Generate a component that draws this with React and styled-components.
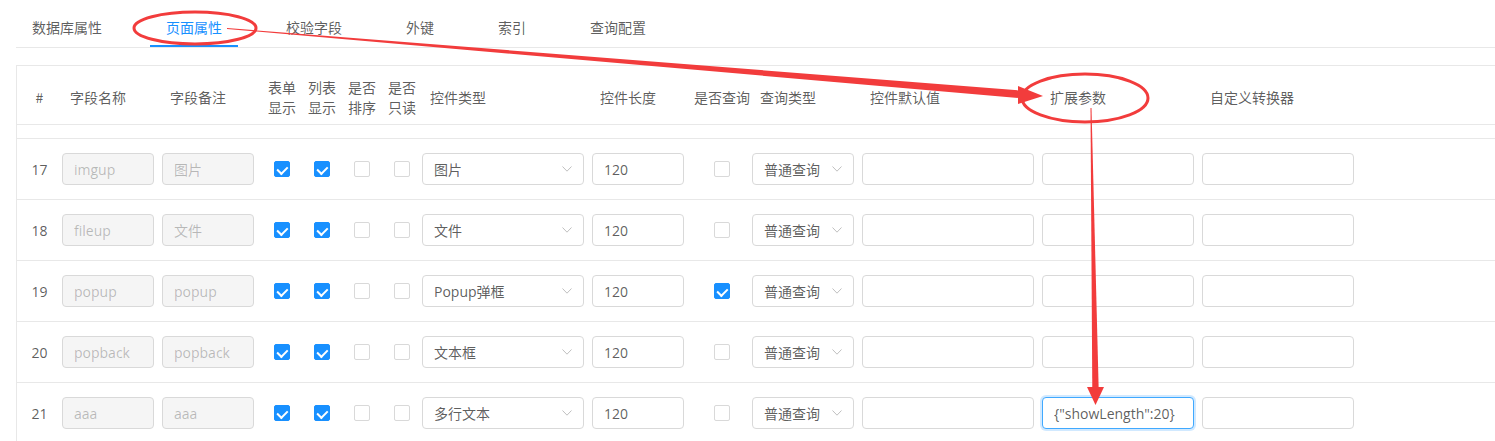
import React from "react";
import styled, { createGlobalStyle, css } from "styled-components";

const Global = createGlobalStyle`
  html, body { margin: 0; padding: 0; background: #fff; overflow: hidden; }
  body {
    font-family: "Open Sans", "Noto Sans CJK SC", sans-serif;
    font-size: 14px;
    color: rgba(0,0,0,0.65);
  }
  * { box-sizing: border-box; }
`;

const COLS = "45px 100px 100px 40px 40px 40px 40px 170px 100px 60px 110px 180px 160px 160px 1fr";

const Page = styled.div`
  position: relative;
  width: 1495px;
  height: 441px;
  overflow: hidden;
`;

const TabNav = styled.div`
  display: flex;
  margin-left: 16px;
  height: 48px;
  border-bottom: 1px solid #e8e8e8;
`;

const Tab = styled.div`
  position: relative;
  padding: 16px 16px 9px;
  margin-right: 32px;
  line-height: 22px;
  height: 47px;
  font-family: "Noto Sans CJK SC", sans-serif;
  color: ${(p) => (p.$active ? "#1890ff" : "rgba(0,0,0,0.65)")};
  white-space: nowrap;
  ${(p) =>
    p.$active &&
    css`
      &::after {
        content: "";
        position: absolute;
        left: 0;
        right: 0;
        bottom: 0;
        height: 2px;
        background: #1890ff;
      }
    `}
`;

const Frame = styled.div`
  margin-top: 17px;
  margin-left: 16px;
  border-top: 1px solid #e8e8e8;
  border-left: 1px solid #e8e8e8;
`;

const HeaderRow = styled.div`
  display: grid;
  grid-template-columns: ${COLS};
  height: 59px;
  border-bottom: 1px solid #e8e8e8;
`;

const HeadCell = styled.div`
  display: flex;
  align-items: center;
  justify-content: ${(p) => (p.$center ? "center" : "flex-start")};
  text-align: ${(p) => (p.$center ? "center" : "left")};
  padding: ${(p) => (p.$center ? "0" : "0 8px")};
  padding-top: 3px;
  font-family: "Noto Sans CJK SC", sans-serif;
  line-height: 20px;
  color: rgba(0,0,0,0.65);
  white-space: nowrap;
`;

const SpacerRow = styled.div`
  height: 14px;
  border-bottom: 1px solid #e8e8e8;
`;

const Row = styled.div`
  display: grid;
  grid-template-columns: ${COLS};
  height: 61px;
  border-bottom: 1px solid #e8e8e8;
`;

const Cell = styled.div`
  display: flex;
  align-items: center;
  justify-content: ${(p) => (p.$center ? "center" : "flex-start")};
`;

const Num = styled.span`
  color: rgba(0,0,0,0.65);
`;

const Input = styled.input`
  width: ${(p) => p.$w}px;
  height: 32px;
  padding: 4px 11px;
  border: 1px solid ${(p) => (p.$focused ? "#40a9ff" : "#d9d9d9")};
  border-radius: 4px;
  font: inherit;
  font-size: 14px;
  color: rgba(0,0,0,0.65);
  background: #fff;
  outline: none;
  ${(p) =>
    p.$focused &&
    css`
      box-shadow: 0 0 0 2px rgba(24,144,255,0.2);
    `}
  ${(p) =>
    p.disabled &&
    css`
      background: #f5f5f5;
      color: rgba(0,0,0,0.25);
    `}
  &:disabled { -webkit-text-fill-color: rgba(0,0,0,0.25); }
`;

const Select = styled.div`
  width: ${(p) => p.$w}px;
  height: 32px;
  display: flex;
  align-items: center;
  justify-content: space-between;
  padding: 0 11px 0 11px;
  border: 1px solid #d9d9d9;
  border-radius: 4px;
  font-family: "Open Sans", "Noto Sans CJK SC", sans-serif;
  color: rgba(0,0,0,0.65);
  white-space: nowrap;
`;

const Check = styled.span`
  position: relative;
  display: inline-block;
  width: 16px;
  height: 16px;
  border-radius: 2px;
  border: 1px solid ${(p) => (p.$on ? "#1890ff" : "#d9d9d9")};
  background: ${(p) => (p.$on ? "#1890ff" : "#fff")};
  ${(p) =>
    p.$on &&
    css`
      &::after {
        content: "";
        position: absolute;
        left: 4px;
        top: 1.5px;
        width: 4.5px;
        height: 8px;
        border: 2px solid #fff;
        border-top: 0;
        border-left: 0;
        transform: rotate(45deg);
      }
    `}
`;

const Overlay = styled.svg`
  position: absolute;
  left: 0;
  top: 0;
  pointer-events: none;
`;

const Chevron = () => (
  <svg width="10" height="6" viewBox="0 0 10 6">
    <polyline points="0.5,0.5 5,5.2 9.5,0.5" fill="none" stroke="#bfbfbf" strokeWidth="1" />
  </svg>
);

const tabs = ["数据库属性", "页面属性", "校验字段", "外键", "索引", "查询配置"];

const headers = [
  { t: "#", c: true },
  { t: "字段名称" },
  { t: "字段备注" },
  { t: ["表单", "显示"], c: true },
  { t: ["列表", "显示"], c: true },
  { t: ["是否", "排序"], c: true },
  { t: ["是否", "只读"], c: true },
  { t: "控件类型" },
  { t: "控件长度" },
  { t: "是否查询", c: true },
  { t: "查询类型" },
  { t: "控件默认值" },
  { t: "扩展参数" },
  { t: "自定义转换器" },
  { t: "" },
];

const rows = [
  { n: 17, name: "imgup", remark: "图片", type: "图片", q: false },
  { n: 18, name: "fileup", remark: "文件", type: "文件", q: false },
  { n: 19, name: "popup", remark: "popup", type: "Popup弹框", q: true },
  { n: 20, name: "popback", remark: "popback", type: "文本框", q: false },
  { n: 21, name: "aaa", remark: "aaa", type: "多行文本", q: false, ext: '{"showLength":20}', focus: true },
];

function taper(x1, y1, x2, y2, w1, w2) {
  const dx = x2 - x1;
  const dy = y2 - y1;
  const L = Math.hypot(dx, dy);
  const nx = -dy / L;
  const ny = dx / L;
  return [
    [x1 + nx * w1, y1 + ny * w1],
    [x2 + nx * w2, y2 + ny * w2],
    [x2 - nx * w2, y2 - ny * w2],
    [x1 - nx * w1, y1 - ny * w1],
  ]
    .map((p) => p.map((v) => v.toFixed(1)).join(","))
    .join(" ");
}

const RED = "#f23c3c";

const Annotations = () => (
  <Overlay width="1495" height="441" viewBox="0 0 1495 441">
    <ellipse cx="195" cy="28" rx="61" ry="16" fill="none" stroke={RED} strokeWidth="3" />
    <ellipse cx="1085" cy="98" rx="63" ry="24" fill="none" stroke={RED} strokeWidth="3" />
    <polygon points={taper(227, 28.5, 1022, 94.5, 0.5, 3.8)} fill={RED} />
    <polygon points="1018,86 1043,96 1018,104" fill={RED} />
    <polygon points={taper(1091, 108, 1095.5, 390, 0.5, 3.2)} fill={RED} />
    <polygon points="1087,387 1104,387 1095.5,405" fill={RED} />
  </Overlay>
);

export default function App() {
  return (
    <>
      <Global />
      <Page>
        <TabNav>
          {tabs.map((t, i) => (
            <Tab key={t} $active={i === 1}>
              {t}
            </Tab>
          ))}
        </TabNav>
        <Frame>
          <HeaderRow>
            {headers.map((h, i) => (
              <HeadCell key={i} $center={h.c}>
                {Array.isArray(h.t) ? (
                  <span>
                    {h.t[0]}
                    <br />
                    {h.t[1]}
                  </span>
                ) : (
                  h.t
                )}
              </HeadCell>
            ))}
          </HeaderRow>
          <SpacerRow />
          {rows.map((r) => (
            <Row key={r.n}>
              <Cell $center>
                <Num>{r.n}</Num>
              </Cell>
              <Cell>
                <Input $w={92} disabled value={r.name} readOnly />
              </Cell>
              <Cell>
                <Input $w={92} disabled value={r.remark} readOnly />
              </Cell>
              <Cell $center>
                <Check $on />
              </Cell>
              <Cell $center>
                <Check $on />
              </Cell>
              <Cell $center>
                <Check />
              </Cell>
              <Cell $center>
                <Check />
              </Cell>
              <Cell>
                <Select $w={162}>
                  <span>{r.type}</span>
                  <Chevron />
                </Select>
              </Cell>
              <Cell>
                <Input $w={92} value="120" readOnly />
              </Cell>
              <Cell $center>
                <Check $on={r.q} />
              </Cell>
              <Cell>
                <Select $w={102}>
                  <span>普通查询</span>
                  <Chevron />
                </Select>
              </Cell>
              <Cell>
                <Input $w={172} value="" readOnly />
              </Cell>
              <Cell>
                <Input $w={152} value={r.ext || ""} $focused={r.focus} readOnly />
              </Cell>
              <Cell>
                <Input $w={152} value="" readOnly />
              </Cell>
              <Cell />
            </Row>
          ))}
        </Frame>
        <Annotations />
      </Page>
    </>
  );
}
